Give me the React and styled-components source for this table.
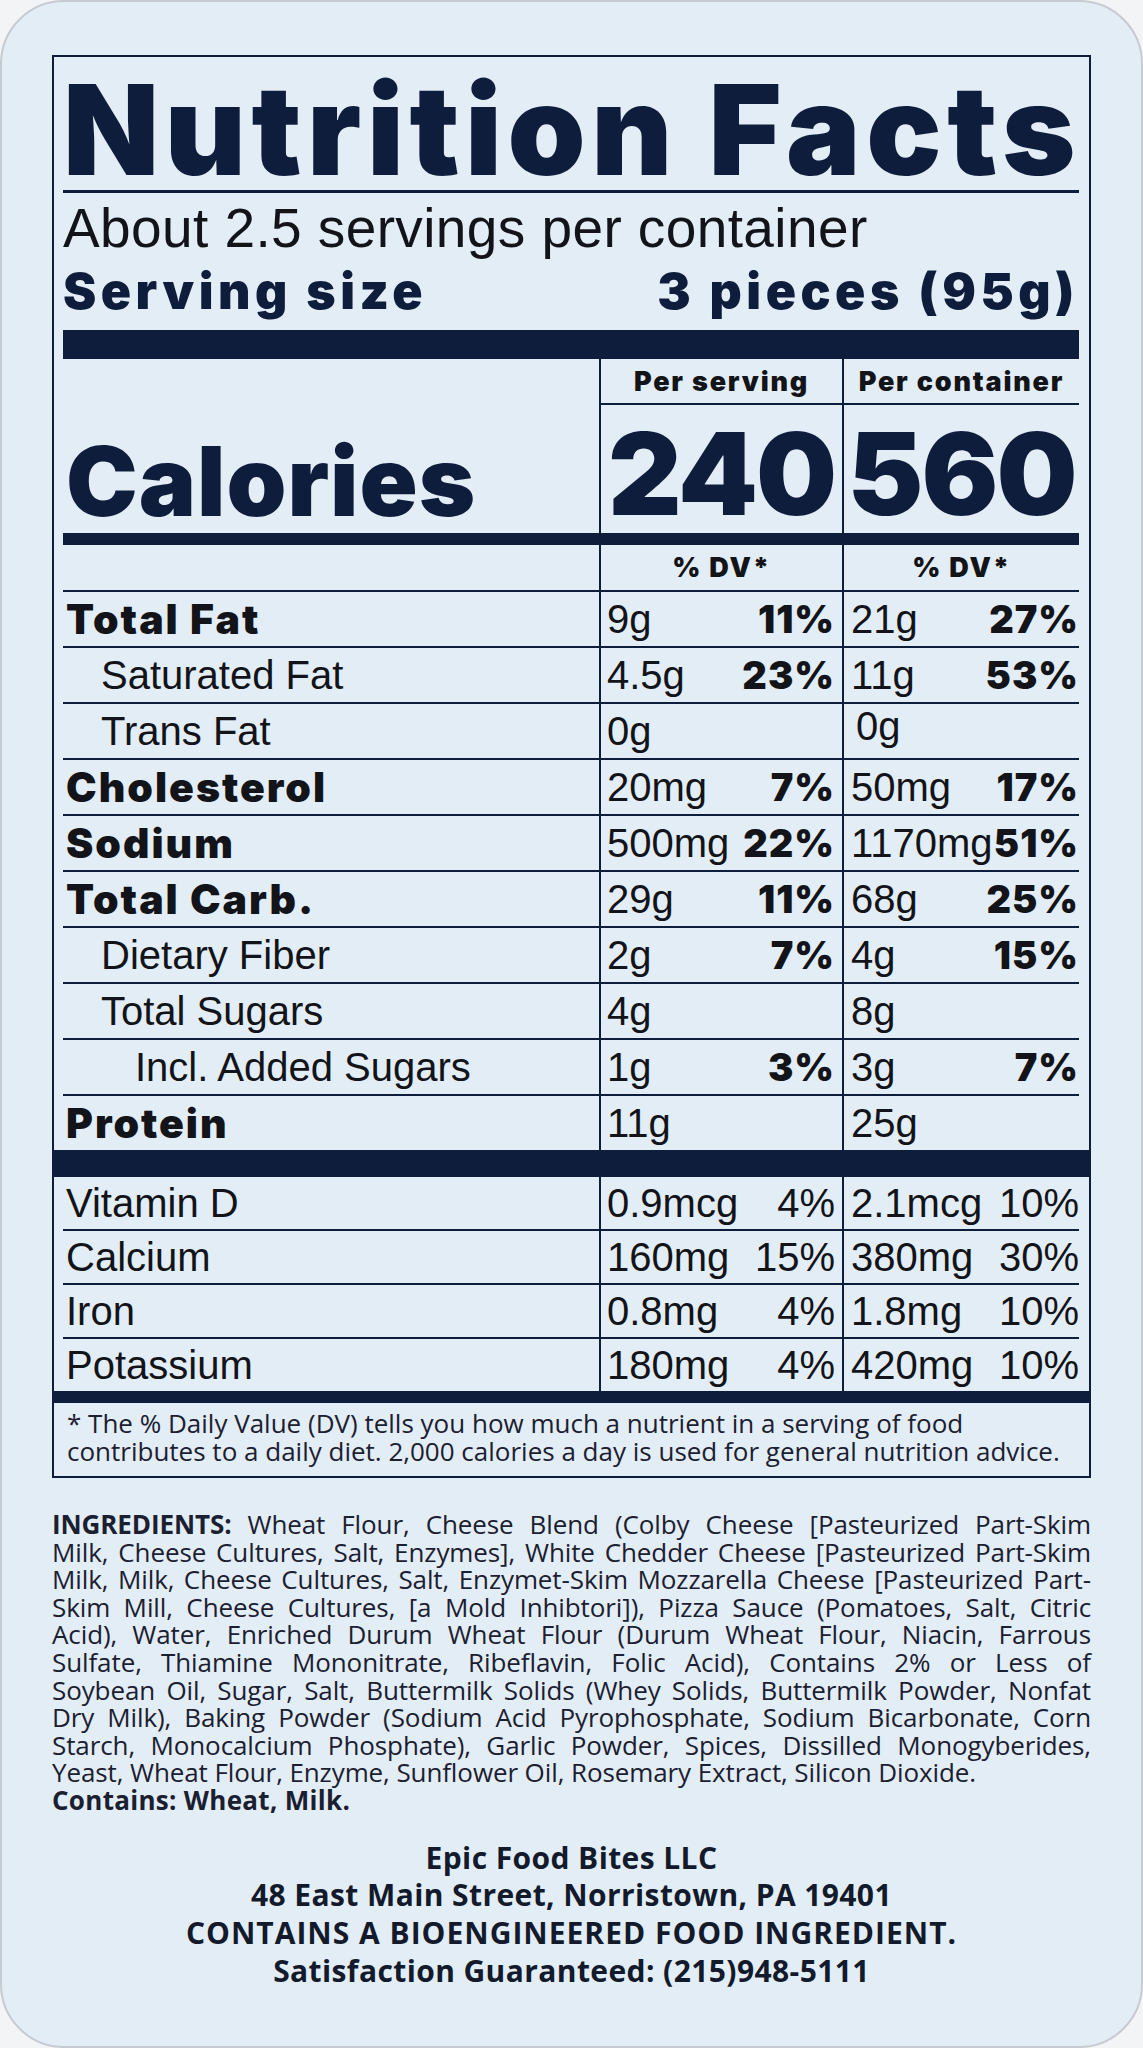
import React from "react";
import styled, { createGlobalStyle } from "styled-components";

const NAVY = "#0f1d3c";
const INK = "#121419";
const BODY = "#1b2030";

const GlobalStyle = createGlobalStyle`
  html, body { margin: 0; padding: 0; background: #f3f4f6; }
  body { font-family: "Liberation Sans", Arial, sans-serif; }
  *, *::before, *::after { box-sizing: border-box; }
`;

const Card = styled.div`
  width: 1143px;
  height: 2048px;
  border: 2px solid #c7cbd1;
  border-radius: 64px;
  background: #e3edf6;
  padding: 53px 50px 0 50px;
  display: flex;
  flex-direction: column;
  overflow: hidden;
`;

const Panel = styled.section`
  border: 2px solid ${NAVY};
  padding: 0 10px 0 9px;
  display: flex;
  flex-direction: column;
`;

const Title = styled.h1`
  margin: 13px 0 0;
  font-family: Inter, sans-serif;
  font-weight: 900;
  font-size: 125px;
  line-height: 120px;
  letter-spacing: 5.6px;
  color: ${NAVY};
  white-space: nowrap;
`;

const Bar = styled.div`
  flex: none;
  height: ${(p) => p.$h}px;
  margin: ${(p) => (p.$bleed ? "0 -10px 0 -9px" : `${p.$top || 0}px 0 0`)};
  background: ${NAVY};
`;

const Servings = styled.div`
  margin-top: 7px;
  font-family: "Liberation Sans", Arial, sans-serif;
  font-size: 55px;
  line-height: 56px;
  letter-spacing: 0.4px;
  color: ${INK};
  white-space: nowrap;
`;

const ServingSize = styled.div`
  margin-top: 9px;
  display: flex;
  justify-content: space-between;
  font-family: Inter, sans-serif;
  font-weight: 900;
  font-size: 50px;
  line-height: 52px;
  letter-spacing: 4.5px;
  color: ${NAVY};
  white-space: nowrap;
`;

const Row = styled.div`
  display: grid;
  grid-template-columns: 536px 243px 237px;
  height: ${(p) => p.$h}px;
  border-bottom: ${(p) => (p.$ruled ? `2px solid ${NAVY}` : "none")};
`;

const Blank = styled.div``;

const HeadCell = styled.div`
  border-left: 2px solid ${NAVY};
  border-bottom: ${(p) => (p.$ruled ? `2px solid ${NAVY}` : "none")};
  text-align: center;
  padding-top: 1px;
  font-family: Inter, sans-serif;
  font-weight: 900;
  font-size: 27px;
  line-height: 43px;
  letter-spacing: 1.8px;
  color: ${INK};
  white-space: nowrap;
`;

const CaloriesLabel = styled.div`
  display: flex;
  align-items: flex-end;
  padding: 0 0 4px 3px;
  font-family: Inter, sans-serif;
  font-weight: 900;
  font-size: 96px;
  line-height: 96px;
  letter-spacing: 1px;
  color: ${NAVY};
  white-space: nowrap;
`;

const CaloriesValue = styled.div`
  display: flex;
  align-items: flex-end;
  justify-content: center;
  border-left: 2px solid ${NAVY};
  padding-bottom: 2px;
  font-family: Inter, sans-serif;
  font-weight: 900;
  font-size: 114px;
  line-height: 114px;
  letter-spacing: -2px;
  color: ${NAVY};
  white-space: nowrap;
`;

const INDENTS = [3, 38, 72];

const Label = styled.div`
  display: flex;
  align-items: center;
  padding-left: ${(p) => INDENTS[p.$indent || 0]}px;
  font-family: ${(p) => (p.$bold ? "Inter, sans-serif" : '"Liberation Sans", Arial, sans-serif')};
  font-weight: ${(p) => (p.$bold ? 900 : 400)};
  font-size: ${(p) => (p.$bold ? 41 : 40)}px;
  letter-spacing: ${(p) => (p.$bold ? 2 : 0)}px;
  line-height: 1;
  color: ${INK};
  white-space: nowrap;
`;

const ValueCell = styled.div`
  display: flex;
  align-items: center;
  justify-content: space-between;
  border-left: 2px solid ${NAVY};
  padding: ${(p) => (p.$side === "b" ? "0 0 0 7px" : "0 7px 0 6px")};
  white-space: nowrap;
`;

const Amount = styled.span`
  font-family: "Liberation Sans", Arial, sans-serif;
  font-size: 40px;
  line-height: 1;
  color: ${INK};
  margin: ${(p) => (p.$nudge ? "0 0 10px 5px" : "0")};
`;

const Percent = styled.span`
  font-family: ${(p) => (p.$bold ? "Inter, sans-serif" : '"Liberation Sans", Arial, sans-serif')};
  font-weight: ${(p) => (p.$bold ? 900 : 400)};
  font-size: ${(p) => (p.$bold ? 38 : 40)}px;
  letter-spacing: ${(p) => (p.$bold ? 1 : 0)}px;
  line-height: 1;
  color: ${INK};
`;

const Footnote = styled.p`
  margin: 0;
  padding: 6px 0 11px 4px;
  font-family: "Open Sans", sans-serif;
  font-size: 26px;
  line-height: 28px;
  letter-spacing: 0;
  color: ${BODY};
`;

const Ingredients = styled.div`
  margin-top: 33px;
  font-family: "Open Sans", sans-serif;
  font-size: 26px;
  line-height: 27.6px;
  letter-spacing: -0.1px;
  color: ${BODY};
`;

const IngLine = styled.div`
  white-space: nowrap;
  text-align: justify;
  text-align-last: ${(p) => (p.$last ? "left" : "justify")};
  font-weight: ${(p) => (p.$bold ? 700 : 400)};
  letter-spacing: ${(p) => (p.$bold ? "0.3px" : "inherit")};
`;

const Strong = styled.b`
  font-weight: 700;
`;

const Footer = styled.div`
  margin-top: 24px;
  text-align: center;
  font-family: "Open Sans", sans-serif;
  font-weight: 700;
  font-size: 30px;
  line-height: 37.7px;
  color: #121a2b;
`;

const FooterLine = styled.div`
  letter-spacing: ${(p) => (p.$caps ? 1 : 0.4)}px;
`;

const nutrients = [
  { label: "Total Fat", bold: true, a: ["9g", "11%"], b: ["21g", "27%"] },
  { label: "Saturated Fat", indent: 1, a: ["4.5g", "23%"], b: ["11g", "53%"] },
  { label: "Trans Fat", indent: 1, a: ["0g"], b: ["0g"], nudge: true },
  { label: "Cholesterol", bold: true, a: ["20mg", "7%"], b: ["50mg", "17%"] },
  { label: "Sodium", bold: true, a: ["500mg", "22%"], b: ["1170mg", "51%"] },
  { label: "Total Carb.", bold: true, a: ["29g", "11%"], b: ["68g", "25%"] },
  { label: "Dietary Fiber", indent: 1, a: ["2g", "7%"], b: ["4g", "15%"] },
  { label: "Total Sugars", indent: 1, a: ["4g"], b: ["8g"] },
  { label: "Incl. Added Sugars", indent: 2, a: ["1g", "3%"], b: ["3g", "7%"] },
  { label: "Protein", bold: true, a: ["11g"], b: ["25g"] },
];

const vitamins = [
  ["Vitamin D", "0.9mcg", "4%", "2.1mcg", "10%"],
  ["Calcium", "160mg", "15%", "380mg", "30%"],
  ["Iron", "0.8mg", "4%", "1.8mg", "10%"],
  ["Potassium", "180mg", "4%", "420mg", "10%"],
];

const ingredientLines = [
  "Milk, Cheese Cultures, Salt, Enzymes], White Chedder Cheese [Pasteurized Part-Skim",
  "Milk, Milk, Cheese Cultures, Salt, Enzymet-Skim Mozzarella Cheese [Pasteurized Part-",
  "Skim Mill, Cheese Cultures, [a Mold Inhibtori]), Pizza Sauce (Pomatoes, Salt, Citric",
  "Acid), Water, Enriched Durum Wheat Flour (Durum Wheat Flour, Niacin, Farrous",
  "Sulfate, Thiamine Mononitrate, Ribeflavin, Folic Acid), Contains 2% or Less of",
  "Soybean Oil, Sugar, Salt, Buttermilk Solids (Whey Solids, Buttermilk Powder, Nonfat",
  "Dry Milk), Baking Powder (Sodium Acid Pyrophosphate, Sodium Bicarbonate, Corn",
  "Starch, Monocalcium Phosphate), Garlic Powder, Spices, Dissilled Monogyberides,",
];

export default function App() {
  return (
    <>
      <GlobalStyle />
      <Card>
        <Panel>
          <Title>Nutrition Facts</Title>
          <Bar $h={3} />
          <Servings>About 2.5 servings per container</Servings>
          <ServingSize>
            <span>Serving size</span>
            <span>3 pieces (95g)</span>
          </ServingSize>
          <Bar $h={29} $top={13} />

          <Row $h={45}>
            <Blank />
            <HeadCell $ruled>Per serving</HeadCell>
            <HeadCell $ruled>Per container</HeadCell>
          </Row>
          <Row $h={129}>
            <CaloriesLabel>Calories</CaloriesLabel>
            <CaloriesValue>240</CaloriesValue>
            <CaloriesValue>560</CaloriesValue>
          </Row>
          <Bar $h={12} />
          <Row $h={47} $ruled>
            <Blank />
            <HeadCell>% DV*</HeadCell>
            <HeadCell>% DV*</HeadCell>
          </Row>

          {nutrients.map((n, i) => (
            <Row key={n.label} $h={i === nutrients.length - 1 ? 54 : 56} $ruled={i < nutrients.length - 1}>
              <Label $bold={n.bold} $indent={n.indent}>{n.label}</Label>
              <ValueCell $side="a">
                <Amount>{n.a[0]}</Amount>
                {n.a[1] && <Percent $bold>{n.a[1]}</Percent>}
              </ValueCell>
              <ValueCell $side="b">
                <Amount $nudge={n.nudge}>{n.b[0]}</Amount>
                {n.b[1] && <Percent $bold>{n.b[1]}</Percent>}
              </ValueCell>
            </Row>
          ))}

          <Bar $h={27} $bleed />

          {vitamins.map((v, i) => (
            <Row key={v[0]} $h={i === vitamins.length - 1 ? 52 : 54} $ruled={i < vitamins.length - 1}>
              <Label>{v[0]}</Label>
              <ValueCell $side="a">
                <Amount>{v[1]}</Amount>
                <Percent>{v[2]}</Percent>
              </ValueCell>
              <ValueCell $side="b">
                <Amount>{v[3]}</Amount>
                <Percent>{v[4]}</Percent>
              </ValueCell>
            </Row>
          ))}

          <Bar $h={12} $bleed />
          <Footnote>
            * The % Daily Value (DV) tells you how much a nutrient in a serving of food
            <br />
            contributes to a daily diet. 2,000 calories a day is used for general nutrition advice.
          </Footnote>
        </Panel>

        <Ingredients>
          <IngLine>
            <Strong>INGREDIENTS:</Strong> Wheat Flour, Cheese Blend (Colby Cheese [Pasteurized Part-Skim
          </IngLine>
          {ingredientLines.map((l) => (
            <IngLine key={l}>{l}</IngLine>
          ))}
          <IngLine $last>Yeast, Wheat Flour, Enzyme, Sunflower Oil, Rosemary Extract, Silicon Dioxide.</IngLine>
          <IngLine $last $bold>Contains: Wheat, Milk.</IngLine>
        </Ingredients>

        <Footer>
          <FooterLine>Epic Food Bites LLC</FooterLine>
          <FooterLine>48 East Main Street, Norristown, PA 19401</FooterLine>
          <FooterLine $caps>CONTAINS A BIOENGINEERED FOOD INGREDIENT.</FooterLine>
          <FooterLine>Satisfaction Guaranteed: (215)948-5111</FooterLine>
        </Footer>
      </Card>
    </>
  );
}
